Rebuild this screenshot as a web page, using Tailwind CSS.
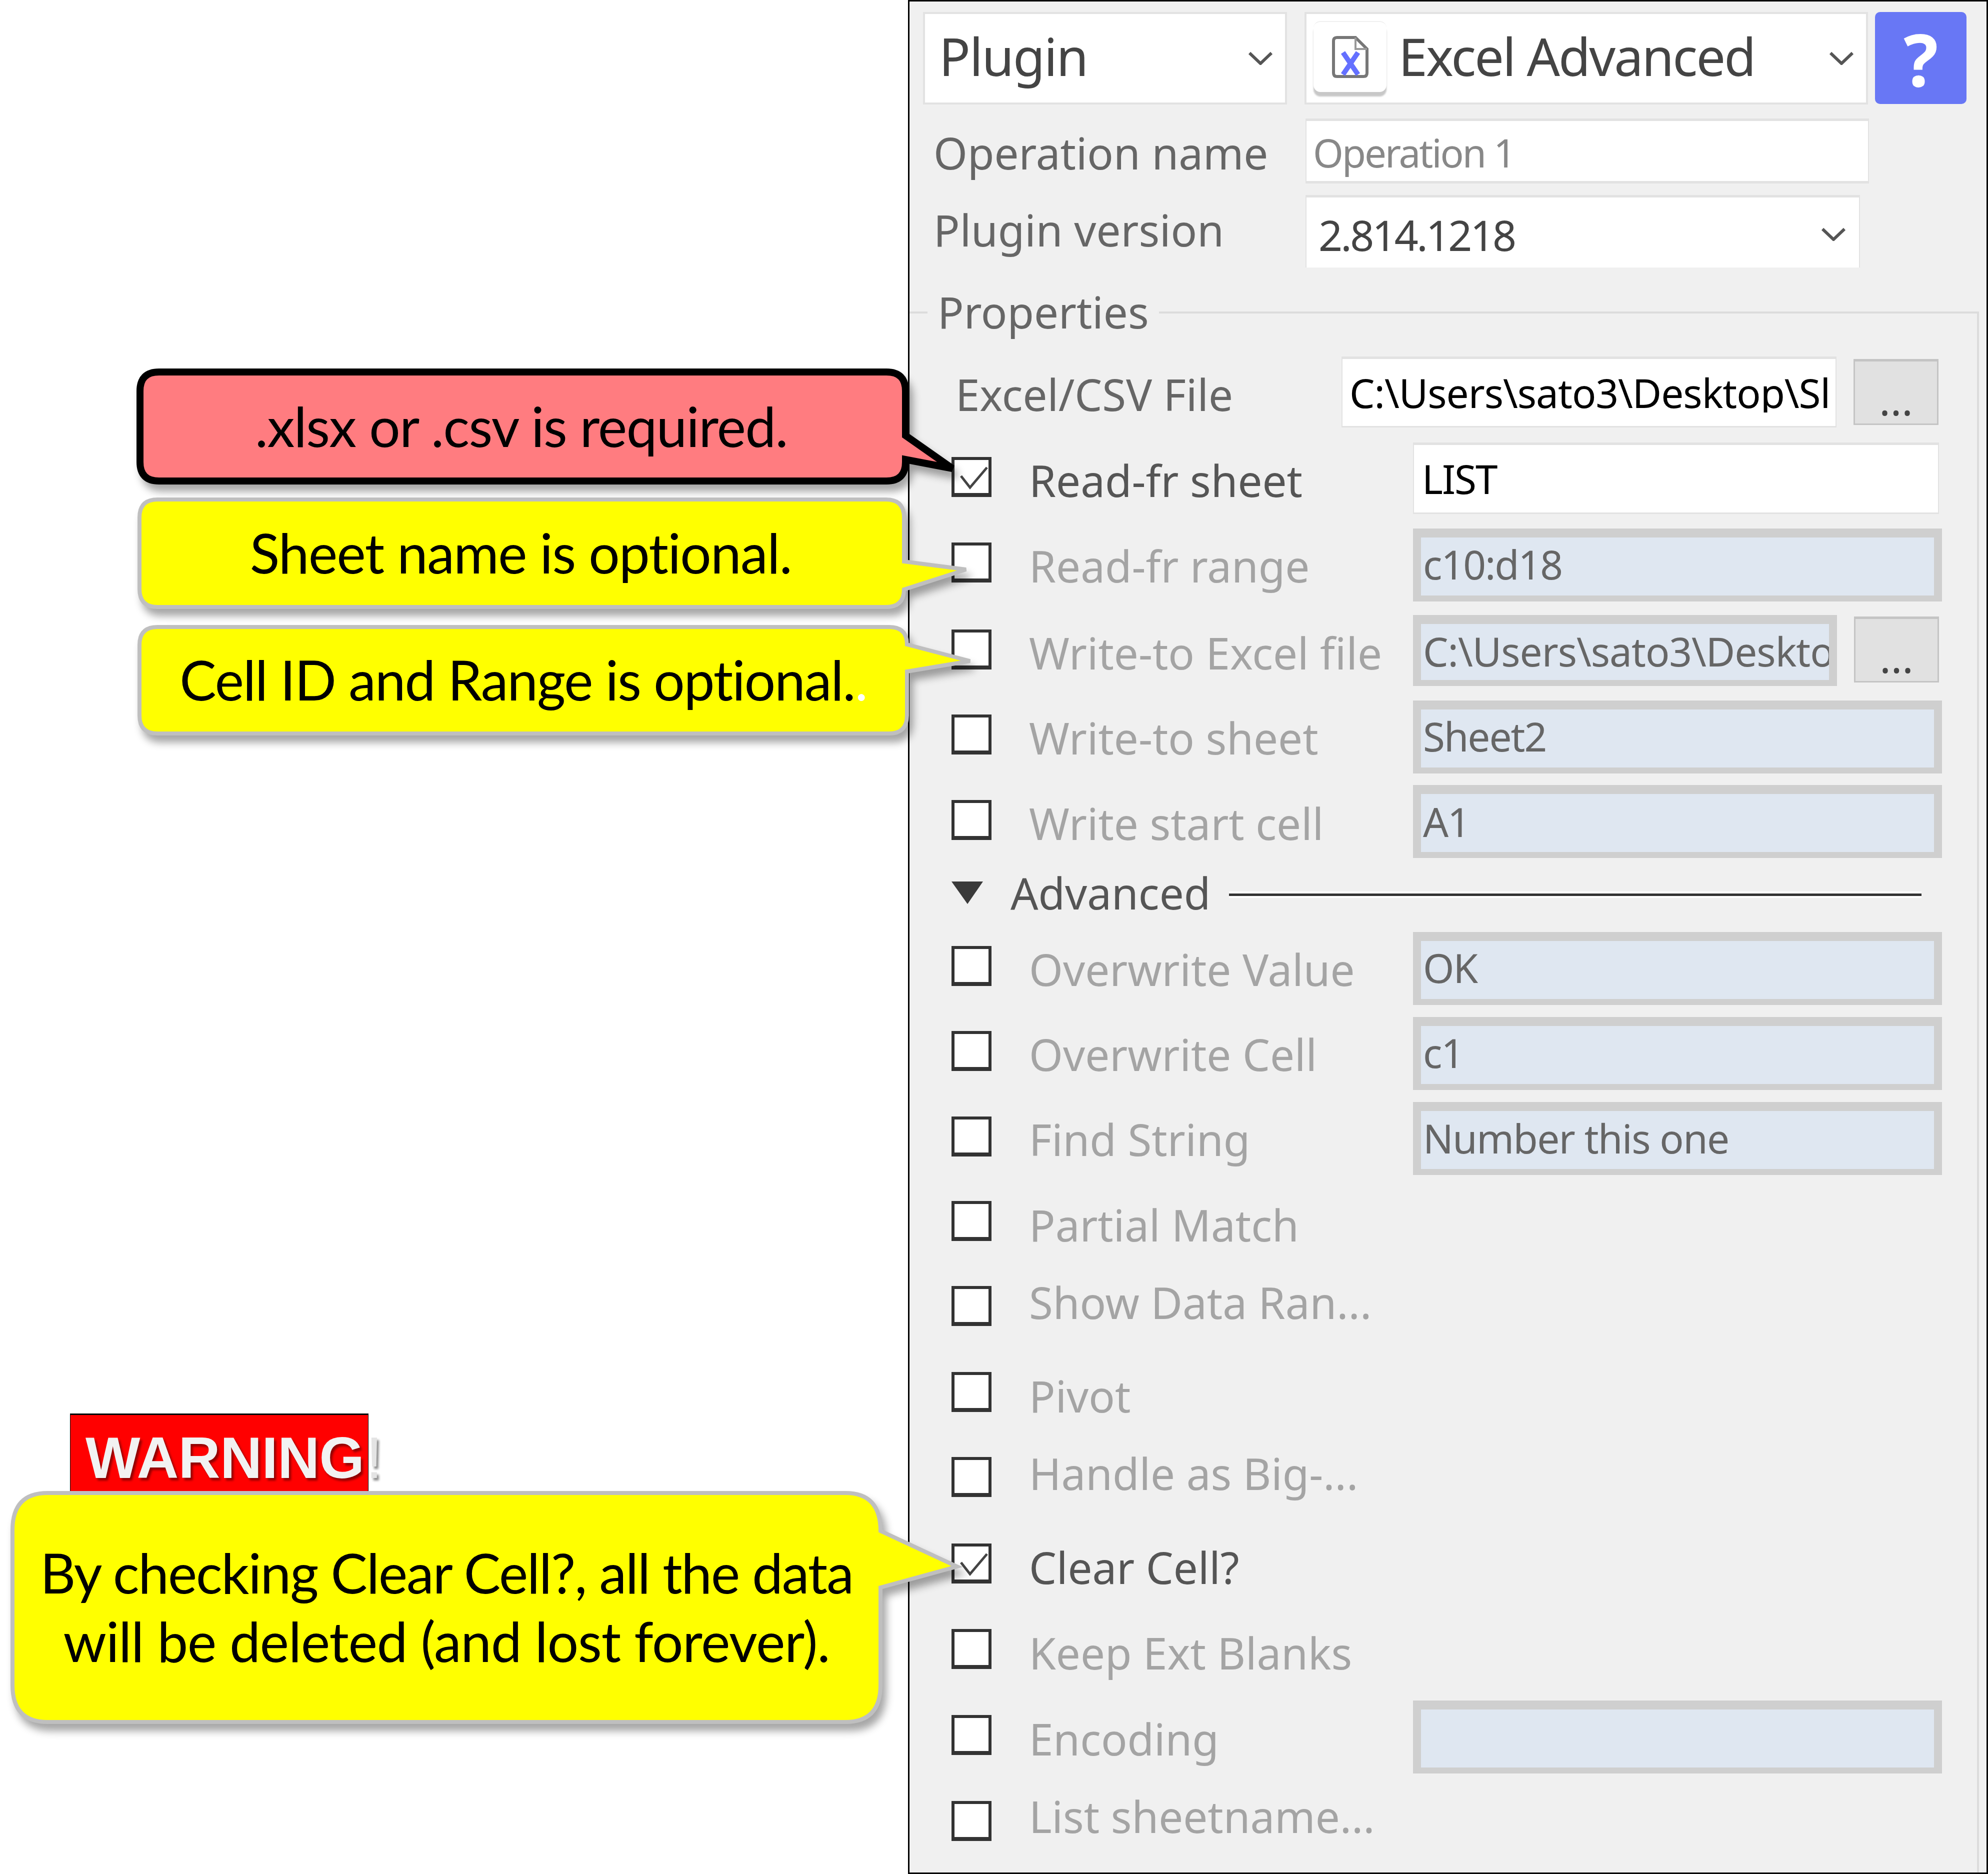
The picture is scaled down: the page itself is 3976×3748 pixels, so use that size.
<!DOCTYPE html>
<html lang="en">
  <head>
    <meta charset="UTF-8" />
    <meta name="viewport" content="width=device-width, initial-scale=1.0" />
    <script src="https://cdn.jsdelivr.net/npm/@tailwindcss/browser@4"></script>
    <title>Excel Advanced</title>
  </head>
  <body class="bg-white">
    <div class="relative flex w-[3976px] h-[3748px] overflow-hidden font-['Noto_Sans',sans-serif]">
      <!-- empty area behind the callouts -->
      <div class="w-[1816px] shrink-0"></div>

      <!-- plugin panel -->
      <div class="flex-1 flex flex-col bg-[#f0f0f0] border-[3px] border-black text-[87px] leading-none">
        <div class="flex mt-[21px] ml-[27px] h-[185px]">
          <div class="flex items-center justify-between w-[728px] bg-white border-4 border-[#e2e2e2] pl-[28px] pr-[24px] text-[104px] text-[#444]">
            <span class="-mt-[10px] tracking-[-2px]">Plugin</span>
            <svg class="w-[50px] h-[27px]" viewBox="0 0 50 27"><path d="M3 3 L25 24 L47 3" fill="none" stroke="#555" stroke-width="6" /></svg>
          </div>
          <div class="flex items-center w-[1127px] ml-[35px] bg-white border-4 border-[#e2e2e2] pl-[14px] pr-[24px] text-[104px] text-[#444]">
            <div class="flex items-center justify-center w-[146px] h-[142px] -mt-[8px] rounded-[14px] bg-white border-t-2 border-[#f0f0f0] shadow-[0_9px_3px_#c8c8c8]">
              <svg class="w-[74px] h-[84px]" viewBox="0 0 74 84">
                <path d="M4 10 Q4 3 11 3 H48 L71 26 V74 Q71 81 64 81 H11 Q4 81 4 74 Z" fill="#fff" stroke="#777" stroke-width="6" />
                <path d="M48 3 V26 H71" fill="none" stroke="#999" stroke-width="4" />
                <path d="M23 33 L53 77 M53 33 L23 77" stroke="#6470ff" stroke-width="10" />
              </svg>
            </div>
            <span class="ml-[24px] -mt-[10px] tracking-[-2.8px]">Excel Advanced</span>
            <svg class="w-[50px] h-[27px] ml-auto" viewBox="0 0 50 27"><path d="M3 3 L25 24 L47 3" fill="none" stroke="#555" stroke-width="6" /></svg>
          </div>
          <div class="flex items-center justify-center w-[183px] h-[184px] ml-[14px] rounded-[10px] bg-[#6877f5] text-white text-[145px] font-bold">?</div>
        </div>

        <div class="flex items-center mt-[28px] ml-[48px] h-[130px]">
          <span class="w-[744px] mt-[6px] text-[#666]">Operation name</span>
          <div class="flex items-center w-[1127px] h-full bg-white border-t-[5px] border-b-[5px] border-x-2 border-[#e2e2e2] pt-[6px] pl-[13px] text-[78px] text-[#888] tracking-[-3px]">Operation 1</div>
        </div>

        <div class="flex items-center mt-[23px] ml-[48px] h-[145px]">
          <span class="w-[744px] -mt-[6px] text-[#666]">Plugin version</span>
          <div class="flex items-center justify-between w-[1109px] h-full bg-white border-t-[5px] border-x-2 border-[#e2e2e2] pl-[24px] pr-[26px] text-[84px] text-[#444] tracking-[-3.7px]">
            <span class="mt-[10px]">2.814.1218</span>
            <svg class="w-[50px] h-[27px] mt-[6px]" viewBox="0 0 50 27"><path d="M3 3 L25 24 L47 3" fill="none" stroke="#555" stroke-width="6" /></svg>
          </div>
        </div>

        <!-- properties group -->
        <div class="flex flex-col flex-1 mt-[88px] mr-[15px] border-t-4 border-r-4 border-[#dcdcdc]">
          <div class="w-fit h-[84px] -mt-[46px] ml-[36px] px-[20px] bg-[#f0f0f0] text-[#666] leading-[84px]">Properties</div>

          <div class="flex items-center mt-[48px] h-[142px] pl-[92px]">
            <span class="w-[772px] mt-[8px] text-[#666]">Excel/CSV File</span>
            <div class="flex items-center w-[990px] h-full bg-white border-t-[5px] border-b-[3px] border-x-2 border-[#e2e2e2] pl-[14px] pr-[14px] text-black text-[80px] tracking-[-1px] whitespace-nowrap overflow-hidden"><span class="overflow-hidden">C:\Users\sato3\Desktop\Sl</span></div>
            <div class="flex items-end justify-center w-[170px] h-[132px] ml-[34px] bg-[#e1e1e1] border-[3px] border-[#c4c4c4] border-t-[5px] text-[#444] text-[84px] pb-[6px]">...</div>
          </div>

          <div class="flex items-center mt-[14px] h-[170px] pl-[84px]">
            <div class="flex w-[80px] h-[80px] bg-white border-[6px] border-b-[8px] border-[#333]"><svg class="w-full h-full" viewBox="0 0 68 66"><path d="M13 32 L31 55 L65 15" fill="none" stroke="#444" stroke-width="5" /></svg></div>
            <span class="w-[768px] ml-[75px] mt-[12px] text-[#555]">Read-fr sheet</span>
            <div class="flex items-center w-[1052px] h-[143px] mt-[4px] bg-white border-t-[5px] border-b-[3px] border-x-2 border-[#e2e2e2] pl-[16px] text-black text-[80px] tracking-[-2px]">LIST</div>
          </div>

          <div class="flex items-center mt-[1px] h-[170px] pl-[84px]">
            <div class="w-[80px] h-[80px] bg-white border-[6px] border-b-[8px] border-[#333]"></div>
            <span class="w-[768px] ml-[75px] mt-[12px] text-[#a4a4a4]">Read-fr range</span>
            <div class="flex items-center w-[1058px] h-[146px] mt-[10px] bg-[#dfe7f1] border-x-[16px] border-t-[18px] border-b-[12px] border-[#cfcfcf] pl-[4px] pb-[10px] text-[#666] text-[80px] tracking-[-2px]">c10:d18</div>
          </div>

          <div class="flex items-center mt-[4px] h-[170px] pl-[84px]">
            <div class="w-[80px] h-[80px] bg-white border-[6px] border-b-[8px] border-[#333]"></div>
            <span class="w-[768px] ml-[75px] mt-[12px] text-[#a4a4a4] whitespace-nowrap">Write-to Excel file</span>
            <div class="flex items-center w-[848px] h-[142px] mt-[4px] bg-[#dfe7f1] border-x-[16px] border-t-[18px] border-b-[12px] border-[#cfcfcf] pl-[4px] pb-[4px] text-[#666] text-[80px] tracking-[-1px] whitespace-nowrap overflow-hidden">C:\Users\sato3\Deskto</div>
            <div class="flex items-end justify-center w-[170px] h-[132px] ml-[34px] bg-[#e1e1e1] border-[3px] border-[#c4c4c4] border-t-[5px] text-[#444] text-[84px] pb-[6px]">...</div>
          </div>

          <div class="flex items-center h-[170px] pl-[84px]">
            <div class="w-[80px] h-[80px] bg-white border-[6px] border-b-[8px] border-[#333]"></div>
            <span class="w-[768px] ml-[75px] mt-[12px] text-[#a4a4a4]">Write-to sheet</span>
            <div class="flex items-center w-[1058px] h-[146px] mt-[10px] bg-[#dfe7f1] border-x-[16px] border-t-[18px] border-b-[12px] border-[#cfcfcf] pl-[4px] pb-[10px] text-[#666] text-[80px] tracking-[-2px]">Sheet2</div>
          </div>

          <div class="flex items-center mt-[1px] h-[170px] pl-[84px]">
            <div class="w-[80px] h-[80px] bg-white border-[6px] border-b-[8px] border-[#333]"></div>
            <span class="w-[768px] ml-[75px] mt-[12px] text-[#a4a4a4]">Write start cell</span>
            <div class="flex items-center w-[1058px] h-[146px] mt-[6px] bg-[#dfe7f1] border-x-[16px] border-t-[18px] border-b-[12px] border-[#cfcfcf] pl-[4px] pb-[6px] text-[#666] text-[80px] tracking-[-2px]">A1</div>
          </div>

          <div class="flex items-center h-[120px] pl-[84px]">
            <svg class="w-[63px] h-[45px]" viewBox="0 0 63 45"><path d="M0 0 H63 L32 45 Z" fill="#3a3a3a" /></svg>
            <span class="ml-[55px] text-[#555]">Advanced</span>
            <div class="w-[1385px] h-[13px] ml-[37px] mt-[8px] bg-[#333] border-y-[4px] border-white"></div>
          </div>

          <div class="flex items-center mt-[2px] h-[170px] pl-[84px]">
            <div class="w-[80px] h-[80px] bg-white border-[6px] border-b-[8px] border-[#333]"></div>
            <span class="w-[768px] ml-[75px] mt-[12px] text-[#a4a4a4]">Overwrite Value</span>
            <div class="flex items-center w-[1058px] h-[146px] mt-[10px] bg-[#dfe7f1] border-x-[16px] border-t-[18px] border-b-[12px] border-[#cfcfcf] pl-[4px] pb-[10px] text-[#666] text-[80px] tracking-[-2px]">OK</div>
          </div>

          <div class="flex items-center h-[170px] pl-[84px]">
            <div class="w-[80px] h-[80px] bg-white border-[6px] border-b-[8px] border-[#333]"></div>
            <span class="w-[768px] ml-[75px] mt-[12px] text-[#a4a4a4]">Overwrite Cell</span>
            <div class="flex items-center w-[1058px] h-[146px] mt-[10px] bg-[#dfe7f1] border-x-[16px] border-t-[18px] border-b-[12px] border-[#cfcfcf] pl-[4px] pb-[10px] text-[#666] text-[80px] tracking-[-2px]">c1</div>
          </div>

          <div class="flex items-center mt-[1px] h-[169px] pl-[84px]">
            <div class="w-[80px] h-[80px] bg-white border-[6px] border-b-[8px] border-[#333]"></div>
            <span class="w-[768px] ml-[75px] mt-[12px] text-[#a4a4a4]">Find String</span>
            <div class="flex items-center w-[1058px] h-[146px] mt-[8px] bg-[#dfe7f1] border-x-[16px] border-t-[18px] border-b-[12px] border-[#cfcfcf] pl-[4px] pb-[8px] text-[#666] text-[80px] tracking-[-1.5px]">Number this one</div>
          </div>

          <div class="flex items-center h-[170px] pl-[84px]">
            <div class="w-[80px] h-[80px] bg-white border-[6px] border-b-[8px] border-[#333]"></div>
            <span class="ml-[75px] mt-[14px] text-[#a4a4a4]">Partial Match</span>
          </div>

          <div class="flex items-center h-[170px] pl-[84px]">
            <div class="w-[80px] h-[80px] bg-white border-[6px] border-b-[8px] border-[#333]"></div>
            <span class="ml-[75px] -mt-[16px] text-[#a4a4a4]">Show Data Ran...</span>
          </div>

          <div class="flex items-center mt-[2px] h-[170px] pl-[84px]">
            <div class="w-[80px] h-[80px] bg-white border-[6px] border-b-[8px] border-[#333]"></div>
            <span class="ml-[75px] mt-[14px] text-[#a4a4a4]">Pivot</span>
          </div>

          <div class="flex items-center h-[170px] pl-[84px]">
            <div class="w-[80px] h-[80px] bg-white border-[6px] border-b-[8px] border-[#333]"></div>
            <span class="ml-[75px] -mt-[16px] text-[#a4a4a4]">Handle as Big-...</span>
          </div>

          <div class="flex items-center mt-[3px] h-[170px] pl-[84px]">
            <div class="flex w-[80px] h-[80px] bg-white border-[6px] border-b-[8px] border-[#333]"><svg class="w-full h-full" viewBox="0 0 68 66"><path d="M13 32 L31 55 L65 15" fill="none" stroke="#444" stroke-width="5" /></svg></div>
            <span class="ml-[75px] mt-[14px] text-[#555]">Clear Cell?</span>
          </div>

          <div class="flex items-center mt-[1px] h-[170px] pl-[84px]">
            <div class="w-[80px] h-[80px] bg-white border-[6px] border-b-[8px] border-[#333]"></div>
            <span class="ml-[75px] mt-[14px] text-[#a4a4a4]">Keep Ext Blanks</span>
          </div>

          <div class="flex items-center mt-[2px] h-[170px] pl-[84px]">
            <div class="w-[80px] h-[80px] bg-white border-[6px] border-b-[8px] border-[#333]"></div>
            <span class="w-[768px] ml-[75px] mt-[14px] text-[#a4a4a4]">Encoding</span>
            <div class="w-[1058px] h-[146px] mt-[8px] bg-[#dfe7f1] border-x-[16px] border-t-[18px] border-b-[12px] border-[#cfcfcf]"></div>
          </div>

          <div class="flex items-center mt-[2px] h-[170px] pl-[84px]">
            <div class="w-[80px] h-[80px] bg-white border-[6px] border-b-[8px] border-[#333]"></div>
            <span class="ml-[75px] -mt-[20px] text-[#a4a4a4]">List sheetname...</span>
          </div>
        </div>
      </div>

      <!-- callouts pasted over the screenshot -->
      <div class="absolute left-[273px] top-[737px] flex items-center justify-center w-[1545px] h-[232px] font-['Lato',sans-serif] text-[110px] text-black tracking-[-1.5px]">
        <svg class="absolute inset-0 overflow-visible drop-shadow-[8px_14px_8px_rgba(0,0,0,0.35)]" width="1545" height="232" viewBox="0 0 1545 232">
          <path d="M45 7 H1500 Q1538 7 1538 45 V134 L1632 200 L1538 182 V187 Q1538 225 1500 225 H45 Q7 225 7 187 V45 Q7 7 45 7 Z" fill="#ff7c80" stroke="#000" stroke-width="14" />
        </svg>
        <span class="relative -mt-[4px] -ml-[6px]">.xlsx or .csv is required.</span>
      </div>

      <div class="absolute left-[275px] top-[995px] flex items-center justify-center w-[1537px] h-[223px] font-['Lato',sans-serif] text-[110px] text-black tracking-[-1.5px]">
        <svg class="absolute inset-0 overflow-visible drop-shadow-[8px_14px_8px_rgba(0,0,0,0.35)]" width="1537" height="223" viewBox="0 0 1537 223">
          <path d="M40 4 H1497 Q1533 4 1533 40 V128 L1657 144 L1533 184 Q1533 219 1497 219 H40 Q4 219 4 183 V40 Q4 4 40 4 Z" fill="#ffff00" stroke="#bfbfbf" stroke-width="8" />
        </svg>
        <span class="relative -mt-[4px] -ml-[4px]">Sheet name is optional.</span>
      </div>

      <div class="absolute left-[275px] top-[1250px] flex items-center justify-center w-[1543px] h-[221px] font-['Lato',sans-serif] text-[110px] text-black tracking-[-1.9px]">
        <svg class="absolute inset-0 overflow-visible drop-shadow-[8px_14px_8px_rgba(0,0,0,0.35)]" width="1543" height="221" viewBox="0 0 1543 221">
          <path d="M40 4 H1503 Q1539 4 1539 39 L1665 72 L1539 93 V181 Q1539 217 1503 217 H40 Q4 217 4 181 V40 Q4 4 40 4 Z" fill="#ffff00" stroke="#bfbfbf" stroke-width="8" />
        </svg>
        <span class="relative -mt-[4px]">Cell ID and Range is optional.<span class="text-white">.</span></span>
      </div>

      <div class="absolute left-[140px] top-[2827px] w-[597px] h-[170px] bg-[#ff0000] border-t-[3px] border-x border-black font-['Liberation_Sans',sans-serif] font-bold text-[116px] leading-none text-[#f2f2f2] tracking-[-0.5px] whitespace-nowrap [text-shadow:4px_5px_4px_rgba(0,0,0,0.45)]">
        <span class="block mt-[28px] ml-[30px]">WARNING<span class="ml-[4px] font-normal text-[#e4e4e4]">!</span></span>
      </div>

      <div class="absolute left-[21px] top-[2982px] flex items-center justify-center w-[1744px] h-[466px] font-['Lato',sans-serif] text-[110px] leading-[137px] text-center text-black tracking-[-2px]">
        <svg class="absolute inset-0 overflow-visible drop-shadow-[8px_14px_8px_rgba(0,0,0,0.35)]" width="1744" height="466" viewBox="0 0 1744 466">
          <path d="M74 4 H1670 Q1740 4 1740 80 L1893 151 L1740 193 V388 Q1740 462 1670 462 H74 Q4 462 4 388 V78 Q4 4 74 4 Z" fill="#ffff00" stroke="#bfbfbf" stroke-width="8" />
        </svg>
        <span class="relative -mt-[4px]">By checking Clear Cell?, all the data<br /><span class="tracking-[-1px]">will be deleted (and lost forever).</span></span>
      </div>
    </div>
  </body>
</html>
